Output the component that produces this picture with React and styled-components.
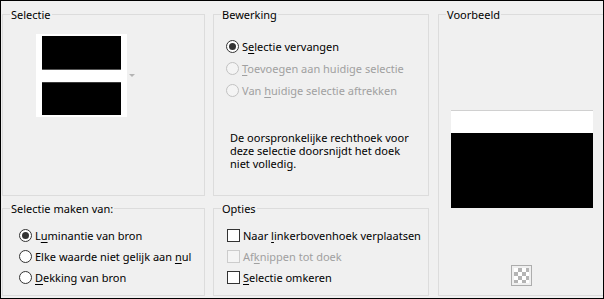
import React from 'react';
import styled, { createGlobalStyle } from 'styled-components';

const Global = createGlobalStyle`
  html, body { margin: 0; padding: 0; background: #f0f0f0; }
  body {
    font-family: "Noto Sans", "Segoe UI", "Liberation Sans", sans-serif;
    font-size: 11px;
    color: #000;
  }
`;

const Window = styled.div`
  box-sizing: border-box;
  width: 604px;
  height: 299px;
  border: 1px solid #000;
  background: #f0f0f0;
  overflow: hidden;
  display: grid;
  grid-template-columns: 203px 216px 168px;
  grid-template-rows: 189px 95px;
  column-gap: 8px;
  row-gap: 5px;
  padding: 6px 0 0 1px;
`;

const Group = styled.fieldset`
  box-sizing: border-box;
  margin: 0;
  margin-left: ${(p) => p.$shift || 0}px;
  padding: 0;
  min-width: 0;
  border: 1px solid #dcdcdc;
  grid-row: ${(p) => p.$row || 'auto'};
  grid-column: ${(p) => p.$col || 'auto'};
  display: flex;
  flex-direction: column;
  align-items: ${(p) => (p.$center ? 'center' : 'stretch')};
`;

const Title = styled.legend`
  margin-left: 7px;
  padding: 0 1px;
  line-height: 15px;
  font-size: 11px;
  white-space: nowrap;
`;

const ThumbRow = styled.div`
  display: flex;
  align-items: center;
  gap: 2px;
  margin: 12px 0 0 33px;
`;

const Thumb = styled.div`
  box-sizing: border-box;
  width: 91px;
  height: 83px;
  background: #fff;
  padding: 2px 6px;
  display: flex;
  flex-direction: column;
  justify-content: space-between;
`;

const Band = styled.div`
  box-sizing: border-box;
  height: ${(p) => p.$h}px;
  background: #000;
  border-top: ${(p) => (p.$edge === 'top' ? '1px solid #3a3a3a' : 'none')};
  border-bottom: ${(p) => (p.$edge === 'bottom' ? '1px solid #555' : 'none')};
`;

const DropArrow = styled.span`
  width: 0;
  height: 0;
  border-left: 3px solid transparent;
  border-right: 3px solid transparent;
  border-top: 3px solid #b4b4b4;
`;

const OptionList = styled.div`
  display: flex;
  flex-direction: column;
  padding: ${(p) => p.$top}px 0 0 ${(p) => p.$left}px;
`;

const Option = styled.div`
  display: flex;
  align-items: center;
  gap: 3px;
  height: ${(p) => p.$h}px;
  color: ${(p) => (p.$disabled ? '#a0a0a0' : '#000')};
  white-space: nowrap;
  line-height: 15px;
`;

const Radio = styled.span`
  box-sizing: border-box;
  flex: none;
  width: 13px;
  height: 13px;
  border-radius: 50%;
  border: 1px solid ${(p) => (p.$disabled ? '#c2c2c2' : '#333')};
  background: ${(p) => (p.$disabled ? '#f4f4f4' : '#fff')};
  display: flex;
  align-items: center;
  justify-content: center;
  &::after {
    content: '';
    display: ${(p) => (p.$checked ? 'block' : 'none')};
    width: 7px;
    height: 7px;
    border-radius: 50%;
    background: #333;
  }
`;

const Check = styled.span`
  box-sizing: border-box;
  flex: none;
  width: 13px;
  height: 13px;
  border: 1px solid ${(p) => (p.$disabled ? '#cccccc' : '#333')};
  background: ${(p) => (p.$disabled ? '#f4f4f4' : '#fff')};
`;

const Key = styled.u`
  text-decoration: underline;
  text-underline-offset: 2px;
`;

const Note = styled.p`
  margin: 30px 0 0 16px;
  line-height: 13px;
  font-size: 11px;
`;

const Preview = styled.div`
  box-sizing: border-box;
  width: 142px;
  height: 98px;
  margin-top: 88px;
  border-top: 1px solid #d0d0d0;
  display: flex;
  flex-direction: column;
`;

const Sky = styled.div`
  height: 22px;
  background: #fff;
`;

const Ground = styled.div`
  flex: 1;
  background: #000;
`;

const CheckerButton = styled.div`
  box-sizing: border-box;
  width: 21px;
  height: 21px;
  margin-top: 57px;
  border: 1px solid #adadad;
  padding: 2px;
  background: #f0f0f0;
`;

const CheckerFill = styled.div`
  width: 100%;
  height: 100%;
  background: repeating-conic-gradient(#b4b4b4 0 25%, #ffffff 0 50%) 0 0 / 8px 8px;
`;

function RadioOption({ h, checked, disabled, children }) {
  return (
    <Option $h={h} $disabled={disabled}>
      <Radio $checked={checked} $disabled={disabled} />
      <span>{children}</span>
    </Option>
  );
}

function CheckOption({ h, disabled, children }) {
  return (
    <Option $h={h} $disabled={disabled}>
      <Check $disabled={disabled} />
      <span>{children}</span>
    </Option>
  );
}

export default function App() {
  return (
    <>
      <Global />
      <Window>
        <Group $row="1" $col="1">
          <Title>Selectie</Title>
          <ThumbRow>
            <Thumb>
              <Band $h={34} $edge="bottom" />
              <Band $h={33} $edge="top" />
            </Thumb>
            <DropArrow />
          </ThumbRow>
        </Group>

        <Group $row="1" $col="2">
          <Title>Bewerking</Title>
          <OptionList $top={13} $left={12}>
            <RadioOption h={22} checked>
              S<Key>e</Key>lectie vervangen
            </RadioOption>
            <RadioOption h={22} disabled>
              <Key>T</Key>oevoegen aan huidige selectie
            </RadioOption>
            <RadioOption h={22} disabled>
              Van <Key>h</Key>uidige selectie aftrekken
            </RadioOption>
          </OptionList>
          <Note>
            De oorspronkelijke rechthoek voor
            <br />
            deze selectie doorsnijdt het doek
            <br />
            niet volledig.
          </Note>
        </Group>

        <Group $row="1 / span 2" $col="3" $shift={1} $center>
          <Title>Voorbeeld</Title>
          <Preview>
            <Sky />
            <Ground />
          </Preview>
          <CheckerButton>
            <CheckerFill />
          </CheckerButton>
        </Group>

        <Group $row="2" $col="1">
          <Title>Selectie maken van:</Title>
          <OptionList $top={9} $left={16}>
            <RadioOption h={21} checked>
              L<Key>u</Key>minantie van bron
            </RadioOption>
            <RadioOption h={21}>
              Elke waarde niet gelijk aan <Key>n</Key>ul
            </RadioOption>
            <RadioOption h={21}>
              <Key>D</Key>ekking van bron
            </RadioOption>
          </OptionList>
        </Group>

        <Group $row="2" $col="2">
          <Title>Opties</Title>
          <OptionList $top={9} $left={13}>
            <CheckOption h={21}>
              Naar <Key>l</Key>inkerbovenhoek verplaatsen
            </CheckOption>
            <CheckOption h={21} disabled>
              Af<Key>k</Key>nippen tot doek
            </CheckOption>
            <CheckOption h={21}>
              <Key>S</Key>electie omkeren
            </CheckOption>
          </OptionList>
        </Group>
      </Window>
    </>
  );
}
